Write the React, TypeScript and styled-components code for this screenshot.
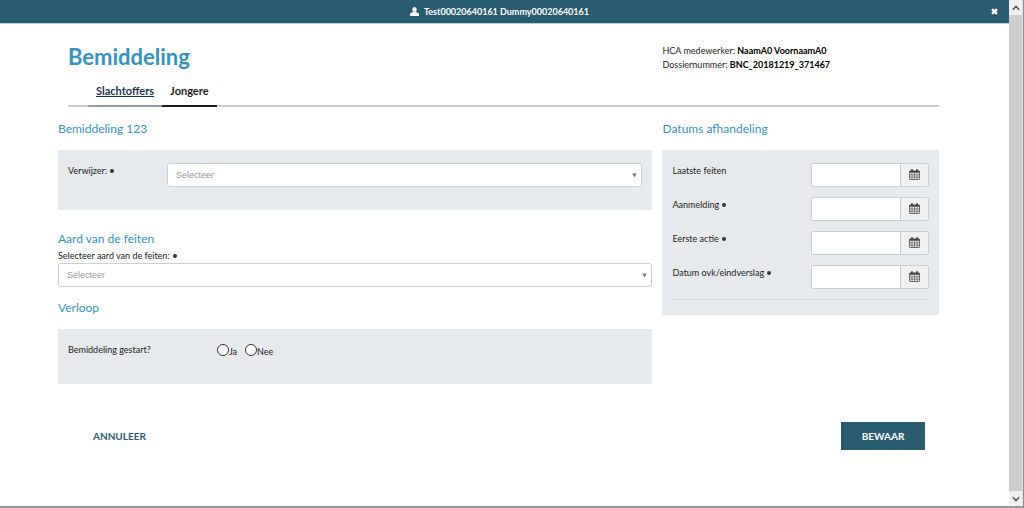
import React from "react";
import styled, { createGlobalStyle } from "styled-components";

const teal = "#295c70";
const blue = "#3592bf";
const panel = "#e7eaed";
const line = "#ccd0d3";
const ink = "#1c1c1c";

const GlobalStyle = createGlobalStyle`
  * { box-sizing: border-box; }
  body {
    margin: 0;
    background: #fff;
    color: ${ink};
    font: 9px/14px Lato, "Liberation Sans", sans-serif;
  }
  button, input, select { font: inherit; color: inherit; }
`;

const Window = styled.div`
  display: flex;
  min-height: 100vh;
  border-right: 1px solid #8f8f8f;
  border-bottom: 2px solid #979797;
`;

const Page = styled.div`
  flex: 1;
  min-width: 0;
`;

const TopBar = styled.header`
  display: grid;
  grid-template-columns: 1fr auto 1fr;
  align-items: center;
  height: 23px;
  padding: 0 10px 0 0;
  background: ${teal};
  color: #fff;
  font-weight: 700;
  box-shadow: 0 1px 0 #b5d0dc;
`;

const UserName = styled.div`
  grid-column: 2;
  display: flex;
  align-items: center;
  gap: 5px;
`;

const CloseButton = styled.button`
  justify-self: end;
  display: flex;
  padding: 0 1px;
  border: 0;
  background: none;
  color: #fff;
`;

const Content = styled.div`
  padding: 20px 70px 0 58px;
`;

const Columns = styled.div`
  display: grid;
  grid-template-columns: 2.15fr 1fr;
  column-gap: 10px;
  align-items: start;
`;

const Title = styled.h1`
  margin: 0;
  padding-left: 10px;
  color: ${blue};
  font-size: 22px;
  line-height: 28px;
  font-weight: 700;
`;

const CaseInfo = styled.div`
  padding: 1px 0 11px;
  b { color: #000; }
`;

const Tabs = styled.nav`
  display: flex;
  height: 24px;
  margin-left: 10px;
  padding-left: 20px;
  box-shadow: inset 0 -2px 0 #cbcdce;
`;

const Tab = styled.a<{ $active?: boolean }>`
  position: relative;
  padding: 0 8px;
  border-bottom: 2px solid ${(p) => (p.$active ? "#1c1c1c" : "#999c9e")};
  color: ${(p) => (p.$active ? ink : "#1b3550")};
  font-size: 11px;
  line-height: 16px;
  font-weight: 700;
  text-decoration: ${(p) => (p.$active ? "none" : "underline")};

  & + &::before {
    content: "";
    position: absolute;
    left: 0;
    top: 1px;
    height: 12px;
    border-left: 1px solid ${line};
  }
`;

const Heading = styled.h2<{ $compact?: boolean }>`
  margin: 0 0 ${(p) => (p.$compact ? 1 : 13)}px;
  color: ${blue};
  font-size: 12px;
  line-height: 16px;
  font-weight: 400;
`;

const Body = styled(Columns)`
  padding-top: 14px;
`;

const Panel = styled.div`
  padding: 13px 10px 23px;
  background: ${panel};
`;

const DatesPanel = styled(Panel)`
  display: grid;
  gap: 10px;
  padding-bottom: 15px;
`;

const FieldRow = styled.div<{ $label: number }>`
  display: grid;
  grid-template-columns: ${(p) => p.$label}px 1fr;
`;

const FieldLabel = styled.label<{ $required?: boolean }>`
  display: block;
  padding-top: 1px;
  &::after {
    content: "";
    display: ${(p) => (p.$required ? "inline-block" : "none")};
    width: 4px;
    height: 4px;
    margin: 0 0 1px 3px;
    border-radius: 2px;
    background: #333;
  }
`;

const GroupLabel = styled.span`
  padding-top: 1px;
`;

const SelectBox = styled.div`
  position: relative;
  select {
    display: block;
    width: 100%;
    height: 24px;
    padding: 0 8px;
    border: 1px solid ${line};
    border-radius: 3px;
    background: #fff;
    color: #999;
    appearance: none;
    font-family: "Liberation Sans", sans-serif;
  }
  svg {
    position: absolute;
    right: 5px;
    top: 10px;
    pointer-events: none;
  }
`;

const SelectField = styled.div`
  margin-bottom: 13px;
`;

const Section = styled.section`
  & + & { margin-top: 21px; }
`;

const Radios = styled.div`
  display: flex;
  gap: 8px;
  padding-top: 1px;
  label {
    display: flex;
    align-items: flex-start;
    line-height: 18px;
  }
  input {
    appearance: none;
    width: 12px;
    height: 12px;
    margin: 1px 0 0;
    border: 1px solid #333;
    border-radius: 50%;
    background: #fff;
  }
  input:checked { box-shadow: inset 0 0 0 2px #fff, inset 0 0 0 6px #333; }
`;

const DateRow = styled.div`
  display: grid;
  grid-template-columns: 1fr 118px;
`;

const DateGroup = styled.div`
  display: flex;
  height: 24px;
  border: 1px solid ${line};
  border-radius: 2px;
  overflow: hidden;
  input {
    flex: 1;
    min-width: 0;
    padding: 0 6px;
    border: 0;
    background: #fff;
  }
  button {
    display: grid;
    place-items: center;
    width: 28px;
    padding: 0 0 1px;
    border: 0;
    border-left: 1px solid ${line};
    background: #f0f0f0;
    color: #444;
  }
`;

const Rule = styled.hr`
  width: 100%;
  margin: 0;
  border: 0;
  border-top: 1px solid #d5d9dc;
`;

const Actions = styled.footer`
  display: flex;
  justify-content: space-between;
  padding: 38px 14px 0 15px;
`;

const Action = styled.button<{ $primary?: boolean }>`
  height: 28px;
  min-width: ${(p) => (p.$primary ? 84 : 0)}px;
  padding: 0 20px;
  border: 0;
  background: ${(p) => (p.$primary ? teal : "transparent")};
  color: ${(p) => (p.$primary ? "#fff" : teal)};
  font-size: 10px;
  font-weight: 700;
  text-transform: uppercase;
`;

const ScrollTrack = styled.div`
  position: sticky;
  top: 0;
  display: flex;
  flex-direction: column;
  justify-content: space-between;
  width: 14px;
  height: calc(100vh - 2px);
  border-right: 1px solid #e4e4e4;
  background: #cdcdcd;
  button {
    display: grid;
    place-items: center;
    height: 15px;
    padding: 0;
    border: 0;
    background: #f0f0f0;
    color: #505050;
  }
`;

const UserIcon = () => (
  <svg width="9" height="9" viewBox="0 0 9 9" fill="currentColor" aria-hidden="true">
    <ellipse cx="4.5" cy="2.5" rx="2.2" ry="2.5" />
    <path d="M2.8 4.5Q4.5 6 6.2 4.5V5.3L8.3 6Q9 6.3 9 7V9H0V7Q0 6.3 0.7 6L2.8 5.3Z" />
  </svg>
);

const CloseIcon = () => (
  <svg width="7" height="7" viewBox="0 0 8 8" stroke="currentColor" strokeWidth="2.8" aria-hidden="true">
    <path d="M1.2 1.2L6.8 6.8M6.8 1.2L1.2 6.8" />
  </svg>
);

const CalendarIcon = () => (
  <svg width="11" height="11" viewBox="0 0 11 11" fill="none" stroke="currentColor" aria-hidden="true">
    <path d="M0.5 2.5Q0.5 1.9 1.1 1.9H9.9Q10.5 1.9 10.5 2.5V9.9Q10.5 10.5 9.9 10.5H1.1Q0.5 10.5 0.5 9.9Z" strokeWidth="0.8" />
    <path d="M0.5 2.9H10.5" strokeWidth="1.6" />
    <path d="M3 0.2V2.8M8 0.2V2.8" strokeWidth="1.8" />
    <path d="M3 4V10M5.5 4V10M8 4V10M1 5.9H10M1 8.2H10" strokeWidth="0.6" />
  </svg>
);

const Caret = () => (
  <svg width="5" height="5" viewBox="0 0 5 5" fill="#777" aria-hidden="true">
    <path d="M0.3 0.5H4.7L2.5 4.5Z" />
  </svg>
);

const Chevron = ({ up }: { up?: boolean }) => (
  <svg width="8" height="6" viewBox="0 0 8 6" fill="none" stroke="currentColor" strokeWidth="1.5" aria-hidden="true">
    <path d={up ? "M0.8 4.8L4 1.4L7.2 4.8" : "M0.8 1.2L4 4.6L7.2 1.2"} />
  </svg>
);

const Select = ({ id }: { id: string }) => (
  <SelectBox>
    <select id={id} defaultValue="">
      <option value="">Selecteer</option>
    </select>
    <Caret />
  </SelectBox>
);

const dates = [
  { id: "feiten", label: "Laatste feiten", required: false },
  { id: "aanmelding", label: "Aanmelding", required: true },
  { id: "actie", label: "Eerste actie", required: true },
  { id: "eind", label: "Datum ovk/eindverslag", required: true },
];

export default function App() {
  return (
    <>
      <GlobalStyle />
      <Window>
        <Page>
          <TopBar>
            <UserName>
              <UserIcon />
              Test00020640161 Dummy00020640161
            </UserName>
            <CloseButton type="button" aria-label="Sluiten">
              <CloseIcon />
            </CloseButton>
          </TopBar>
          <Content>
            <Columns>
              <Title>Bemiddeling</Title>
              <CaseInfo>
                <div>
                  HCA medewerker: <b>NaamA0 VoornaamA0</b>
                </div>
                <div>
                  Dossiernummer: <b>BNC_20181219_371467</b>
                </div>
              </CaseInfo>
            </Columns>
            <Tabs>
              <Tab href="#slachtoffers">Slachtoffers</Tab>
              <Tab href="#jongere" $active>
                Jongere
              </Tab>
            </Tabs>
            <Body as="main">
              <div>
                <Section>
                  <Heading>Bemiddeling 123</Heading>
                  <Panel>
                    <FieldRow $label={99}>
                      <FieldLabel htmlFor="verwijzer" $required>
                        Verwijzer:
                      </FieldLabel>
                      <Select id="verwijzer" />
                    </FieldRow>
                  </Panel>
                </Section>
                <Section>
                  <Heading $compact>Aard van de feiten</Heading>
                  <SelectField>
                    <FieldLabel htmlFor="aard" $required>
                      Selecteer aard van de feiten:
                    </FieldLabel>
                    <Select id="aard" />
                  </SelectField>
                  <Heading>Verloop</Heading>
                  <Panel>
                    <FieldRow $label={149} role="radiogroup" aria-labelledby="gestart">
                      <GroupLabel id="gestart">Bemiddeling gestart?</GroupLabel>
                      <Radios>
                        <label>
                          <input type="radio" name="gestart" />
                          Ja
                        </label>
                        <label>
                          <input type="radio" name="gestart" />
                          Nee
                        </label>
                      </Radios>
                    </FieldRow>
                  </Panel>
                </Section>
              </div>
              <Section>
                <Heading>Datums afhandeling</Heading>
                <DatesPanel>
                  {dates.map((d) => (
                    <DateRow key={d.id}>
                      <FieldLabel htmlFor={d.id} $required={d.required}>
                        {d.label}
                      </FieldLabel>
                      <DateGroup>
                        <input id={d.id} type="text" />
                        <button type="button" aria-label={`Kies datum: ${d.label}`}>
                          <CalendarIcon />
                        </button>
                      </DateGroup>
                    </DateRow>
                  ))}
                  <Rule />
                </DatesPanel>
              </Section>
            </Body>
            <Actions>
              <Action type="button">Annuleer</Action>
              <Action type="button" $primary>
                Bewaar
              </Action>
            </Actions>
          </Content>
        </Page>
        <ScrollTrack>
          <button type="button" aria-label="Omhoog">
            <Chevron up />
          </button>
          <button type="button" aria-label="Omlaag">
            <Chevron />
          </button>
        </ScrollTrack>
      </Window>
    </>
  );
}
